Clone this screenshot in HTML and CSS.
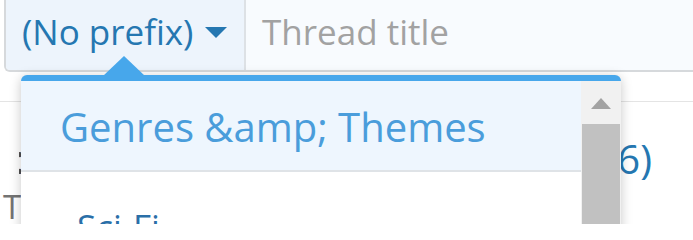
FILE: index.html
```html
<!DOCTYPE html>
<html lang="en">
<head>
<meta charset="utf-8">
<title>Post thread</title>
<link rel="stylesheet" href="styles.css">
</head>
<body>
<div class="page">
  <div class="input-group">
    <div class="prefix">
      <span class="prefix-text">(No prefix)</span>
      <span class="caret"></span>
    </div>
    <div class="title-input">Thread title</div>
  </div>
  <div class="rule"></div>
  <div class="form-row">
    <div class="label"><span>Prefix:</span></div>
    <div class="value">Threads (16)</div>
  </div>
  <div class="form-row-2">To</div>
</div>

<div class="menu">
  <span class="menu-arrow"></span>
  <div class="menu-content">
    <div class="menu-header">Genres &amp;amp; Themes</div>
    <div class="menu-list">
      <div class="menu-item">Sci-Fi</div>
    </div>
  </div>
  <div class="scrollbar">
    <div class="scroll-btn"><span class="scroll-up"></span></div>
    <div class="scroll-thumb"></div>
  </div>
</div>
</body>
</html>
```
FILE: styles.css
```css
html, body {
  margin: 0;
  padding: 0;
  background: #fff;
  overflow: hidden;
}
body {
  width: 693px;
  height: 224px;
  position: relative;
  font-family: "Open Sans", "Noto Sans", sans-serif;
}
.page {
  display: flex;
  flex-direction: column;
}
.input-group {
  display: flex;
  margin-left: 4px;
  width: 720px;
  height: 70px;
  border-left: 2px solid #d6d9dc;
  border-bottom: 2px solid #d6d9dc;
  border-bottom-left-radius: 6px;
  background: #f8fbfe;
}
.prefix {
  width: 222px;
  padding: 14px 0 0 16px;
  display: flex;
  align-items: flex-start;
  background: #edf4fc;
  border-right: 2px solid #dde1e5;
  border-bottom-left-radius: 4px;
  color: #2577b1;
  font-size: 35px;
  line-height: 35px;
  white-space: nowrap;
}
.caret {
  margin: 13px 0 0 12px;
  width: 0;
  height: 0;
  border-left: 11px solid transparent;
  border-right: 11px solid transparent;
  border-top: 11px solid #2577b1;
}
.title-input {
  flex: 1;
  padding: 14px 0 0 16px;
  color: #a2a2a2;
  font-size: 35px;
  line-height: 35px;
  white-space: nowrap;
}
.rule {
  margin-top: 29px;
  height: 1px;
  background: #e4e4e4;
}
.form-row {
  display: flex;
  margin-top: 37px;
  font-size: 40px;
  line-height: 40px;
  white-space: nowrap;
}
.label {
  margin-left: 19px;
  width: 6px;
  overflow: hidden;
  display: flex;
  justify-content: flex-end;
  color: #505050;
}
.value {
  flex: 1;
  text-align: right;
  padding-right: 41px;
  color: #2577b1;
}
.form-row-2 {
  margin-top: 11px;
  padding-left: 3px;
  font-size: 33px;
  line-height: 33px;
  color: #737373;
}

.menu {
  position: absolute;
  left: 21px;
  top: 75px;
  width: 600px;
  height: 180px;
  display: flex;
  background: #fff;
  border-top: 6px solid #47a7eb;
  border-radius: 6px 6px 0 0;
  box-shadow: 0 2px 12px rgba(0, 0, 0, 0.22);
}
.menu-arrow {
  position: absolute;
  top: -25px;
  left: 82px;
  width: 0;
  height: 0;
  border-left: 21px solid transparent;
  border-right: 21px solid transparent;
  border-bottom: 20px solid #47a7eb;
}
.menu-content {
  flex: 1;
  display: flex;
  flex-direction: column;
  overflow: hidden;
}
.menu-header {
  padding: 26px 0 23px 39px;
  font-size: 40px;
  line-height: 40px;
  color: #4a9ddb;
  background: #eef6fe;
  border-bottom: 2px solid #dfe3e7;
  white-space: nowrap;
}
.menu-list {
  flex: 1;
  background: #fff;
}
.menu-item {
  padding: 37px 0 0 56px;
  font-size: 35px;
  line-height: 35px;
  color: #2a6fa8;
}
.scrollbar {
  width: 40px;
  display: flex;
  flex-direction: column;
  background: #f1f1f1;
}
.scroll-btn {
  height: 43px;
  display: flex;
  justify-content: center;
  align-items: flex-start;
}
.scroll-up {
  margin-top: 17px;
  width: 0;
  height: 0;
  border-left: 10px solid transparent;
  border-right: 10px solid transparent;
  border-bottom: 11px solid #a3a3a3;
}
.scroll-thumb {
  flex: 1;
  margin: 0 1px;
  background: #c1c1c1;
}
```
